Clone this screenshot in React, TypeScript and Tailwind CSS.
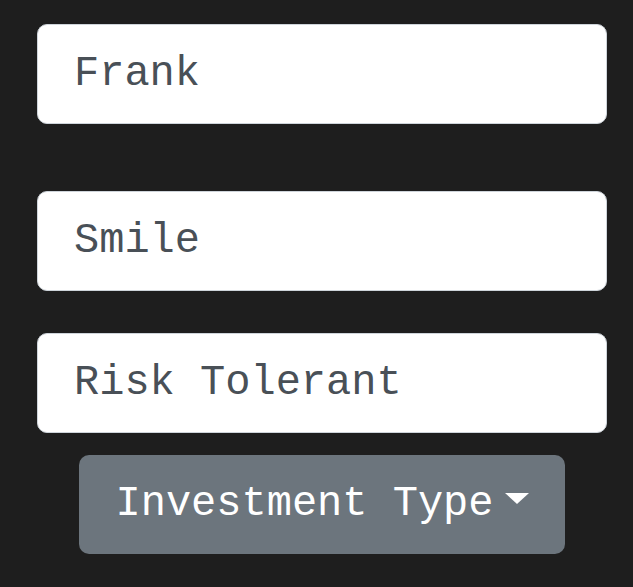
import React from "react";

const font = { fontFamily: '"Liberation Mono", "DejaVu Sans Mono", monospace' };

function Field({ value, className }: { value: string; className?: string }) {
  return (
    <input
      readOnly
      value={value}
      style={font}
      className={`block w-[570px] h-[100px] rounded-[10px] border border-[#ced4da] bg-white px-[36px] text-[42px] text-[#495057] outline-none ${className ?? ""}`}
    />
  );
}

export default function App() {
  return (
    <div className="min-h-[587px] w-full bg-[#1e1e1e] pt-[24px] pl-[37px]">
      <div className="flex w-[570px] flex-col">
        <Field value="Frank" />
        <Field value="Smile" className="mt-[67px]" />
        <Field value="Risk Tolerant" className="mt-[42px]" />
        <button
          style={font}
          className="mx-auto mt-[22px] flex h-[99px] w-[486px] items-center justify-center rounded-[10px] bg-[#6c757d] text-[42px] text-white"
        >
          <span>Investment Type</span>
          <span className="ml-[11px] mb-[12px] inline-block h-0 w-0 border-x-[12px] border-t-[11px] border-x-transparent border-t-white" />
        </button>
      </div>
    </div>
  );
}
